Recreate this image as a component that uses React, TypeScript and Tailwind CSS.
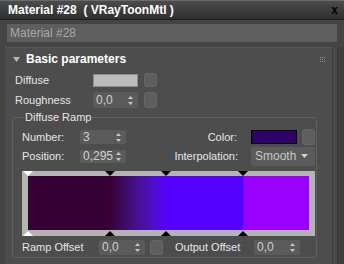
import React from 'react';

const font = { fontFamily: '"Liberation Sans", Arial, sans-serif' };

const Arrows = () => (
  <svg width="5" height="9" viewBox="0 0 5 9" className="shrink-0">
    <path d="M2.5 0 L5 3 L0 3 Z" fill="#c8c8c8" />
    <path d="M0 6 L5 6 L2.5 9 Z" fill="#c8c8c8" />
  </svg>
);

const Spinner = ({ value, w, h = 'h-[16px]' }: { value: string; w: string; h?: string }) => (
  <div className={`${w} ${h} bg-[#5b5b5b] rounded-[2px] flex items-center justify-between pl-[3px] pr-[5px] text-[12px] text-[#d0d0d0]`}>
    <span>{value}</span>
    <Arrows />
  </div>
);

const MapButton = ({ h = 'h-[14px]' }: { h?: string }) => (
  <div className={`w-[13px] ${h} bg-[#5e5e5e] rounded-[3px] border border-[#666]`} />
);

const Marker = ({ left, up, white }: { left: string; up?: boolean; white?: boolean }) => (
  <div
    className={`absolute ${left} ${up ? 'bottom-0' : 'top-0'} w-0 h-0 border-l-[5px] border-r-[5px] border-l-transparent border-r-transparent ${
      up ? `border-b-[5px] ${white ? 'border-b-white' : 'border-b-black'}` : `border-t-[5px] ${white ? 'border-t-white' : 'border-t-black'}`
    }`}
  />
);

export default function App() {
  return (
    <div className="w-[344px] h-[264px] overflow-hidden bg-[#444444] flex flex-col select-none" style={font}>
      {/* Title bar */}
      <div className="h-[20px] shrink-0 flex items-center justify-between pl-[8px] pr-[6px] bg-gradient-to-b from-[#4c4c4c] to-[#2f2f2f] border-t border-[#6a6a6a] border-b border-b-[#1e1e1e]">
        <span className="text-[12px] font-bold text-white whitespace-pre">Material #28  ( VRayToonMtl )</span>
        <span className="text-[12px] font-bold text-black leading-none">x</span>
      </div>

      {/* Name field */}
      <div className="shrink-0 pt-[4px] pb-[5px] pl-[7px] pr-[7px]">
        <div className="h-[18px] bg-[#5e5e5e] flex items-center pl-[3px] text-[12px] text-[#a8a8a8]">Material #28</div>
      </div>

      {/* Rollout area */}
      <div className="flex-1 flex min-h-0">
        <div className="w-[5px] shrink-0" />
        <div className="w-[327px] shrink-0 bg-[#4d4d4d] border-t border-[#575757] flex flex-col">
          {/* Rollout header */}
          <div className="h-[22px] flex items-center justify-between pl-[8px] pr-[7px]">
            <div className="flex items-center gap-[6px]">
              <svg width="7" height="5" viewBox="0 0 7 5">
                <path d="M0 0 L7 0 L3.5 5 Z" fill="#b8b8b8" />
              </svg>
              <span className="text-[12px] font-bold text-white">Basic parameters</span>
            </div>
            <div className="grid grid-cols-3 gap-[1px]">
              {Array.from({ length: 9 }).map((_, i) => (
                <div key={i} className="w-[1px] h-[1px] bg-[#8a8a8a]" />
              ))}
            </div>
          </div>

          {/* Diffuse */}
          <div className="h-[20px] flex items-center pl-[10px] text-[11px] text-[#e6e6e6]">
            <span className="w-[78px]">Diffuse</span>
            <div className="w-[45px] h-[13px] bg-[#bcbcbc] border border-[#8c8c8c]" />
            <div className="ml-[6px]"><MapButton /></div>
          </div>

          {/* Roughness */}
          <div className="h-[20px] flex items-center pl-[10px] text-[11px] text-[#e6e6e6]">
            <span className="w-[78px]">Roughness</span>
            <Spinner value="0,0" w="w-[45px]" />
            <div className="ml-[6px]"><MapButton h="h-[16px]" /></div>
          </div>

          {/* Diffuse Ramp group */}
          <fieldset className="ml-[7px] mr-[15px] mt-[1px] border border-[#5f5f5f] rounded-[3px] pl-[9px] pr-[1px]">
            <legend className="text-[11px] text-[#e6e6e6] px-[1px] ml-[2px] leading-[13px]">Diffuse Ramp</legend>

            <div className="grid grid-cols-[58px_46px_1fr_64px] items-center text-[11px] text-[#e6e6e6] mt-[4px]">
              <span className="h-[18px] flex items-center">Number:</span>
              <Spinner value="3" w="w-[46px]" h="h-[14px]" />
              <span className="text-right pr-[14px]">Color:</span>
              <div className="flex items-center gap-[5px]">
                <div className="w-[46px] h-[14px] bg-[#2e006c] border border-black" />
                <MapButton h="h-[16px]" />
              </div>

              <span className="h-[20px] flex items-center">Position:</span>
              <Spinner value="0,295" w="w-[46px]" h="h-[13px]" />
              <span className="text-right pr-[13px] whitespace-nowrap">Interpolation:</span>
              <div className="h-[19px] bg-[#5b5b5b] rounded-[2px] flex items-center justify-between pl-[4px] pr-[7px] text-[12px] text-[#c8c8c8]">
                <span>Smooth</span>
                <svg width="7" height="4" viewBox="0 0 7 4">
                  <path d="M0 0 L7 0 L3.5 4 Z" fill="#d0d0d0" />
                </svg>
              </div>
            </div>

            {/* Ramp */}
            <div className="relative mt-[5px] w-[293px] h-[65px] bg-[#b4b4b4] pt-[5px] pb-[6px] px-[6px]">
              <div className="flex h-full">
                <div className="w-[82px] bg-[#360035]" />
                <div className="w-[56px] bg-gradient-to-r from-[#360035] to-[#5400ff]" />
                <div className="w-[77px] bg-[#5400ff]" />
                <div className="flex-1 bg-[#9a00ff]" />
              </div>
              <div className="absolute inset-0">
                <Marker left="left-[1px]" white />
                <Marker left="left-[83px]" />
                <Marker left="left-[139px]" />
                <Marker left="left-[216px]" />
                <Marker left="left-[1px]" up white />
                <Marker left="left-[83px]" up />
                <Marker left="left-[139px]" up />
                <Marker left="left-[216px]" up />
              </div>
            </div>

            {/* Offsets */}
            <div className="h-[20px] mt-[1px] flex items-center text-[11px] text-[#e6e6e6]">
              <span className="w-[77px]">Ramp Offset</span>
              <Spinner value="0,0" w="w-[46px]" h="h-[15px]" />
              <div className="ml-[5px]"><MapButton h="h-[15px]" /></div>
              <span className="ml-[12px] w-[79px]">Output Offset</span>
              <Spinner value="0,0" w="w-[46px]" h="h-[15px]" />
            </div>
          </fieldset>
        </div>
        <div className="w-[5px] shrink-0 bg-[#4a4a4a] border-l border-[#3a3a3a]" />
        <div className="flex-1 bg-[#3f3f3f] border-l border-[#363636]" />
      </div>
    </div>
  );
}
